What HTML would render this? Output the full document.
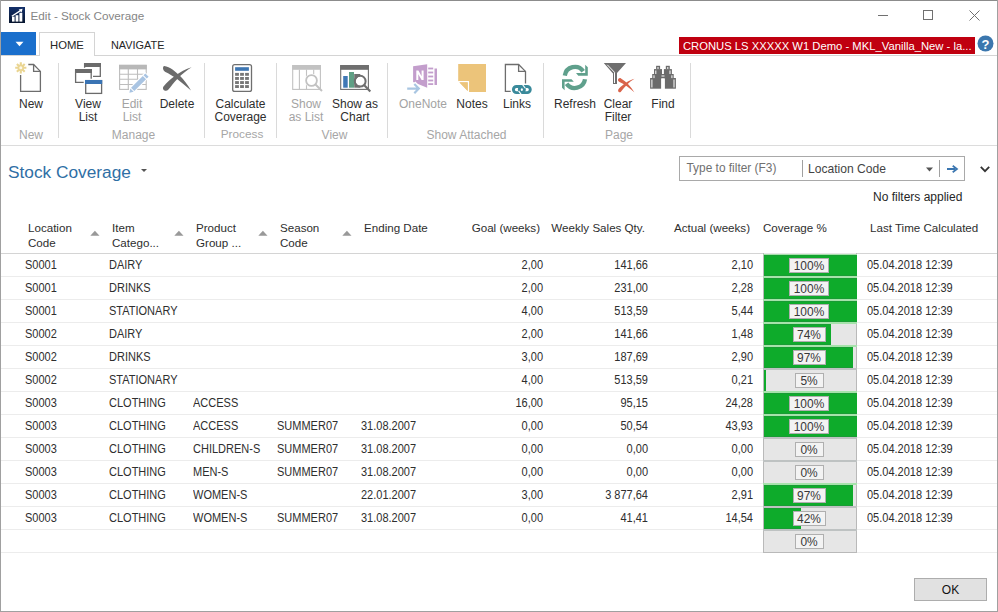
<!DOCTYPE html>
<html><head><meta charset="utf-8">
<style>
html,body{margin:0;padding:0;}
body{width:998px;height:612px;position:relative;overflow:hidden;background:#fff;font-family:"Liberation Sans",sans-serif;color:#2e2e2e;}
.a{position:absolute;}
.t{position:absolute;white-space:nowrap;line-height:1;}
.c{text-align:center;}
.r{text-align:right;}
.sx{transform:scaleX(.895);transform-origin:0 0;}
.sxr{transform:scaleX(.895);transform-origin:100% 0;}
.dis{color:#a3a3a3;}
.grp{color:#a6a6a6;}
.sep{position:absolute;width:1px;background:#dadada;top:63px;height:75px;}
.hl{position:absolute;left:1px;width:996px;height:1px;background:#ececec;}
.bar{position:absolute;left:764px;width:93px;height:22px;background:#e3e3e3;box-sizing:border-box;border:1px solid #c3c3c3;}
.bar .g{position:absolute;left:-1px;top:-1px;bottom:-1px;background:#11aa2f;}
.bar .lb{position:absolute;top:3px;height:15px;box-sizing:border-box;border:1px solid rgba(0,0,0,0.3);background:#f3f3f3;font-size:11px;line-height:13px;color:#333;text-align:center;}
</style></head><body>
<!-- window border -->
<div class="a" style="left:0;top:0;width:998px;height:1px;background:#8c8c8c"></div>
<div class="a" style="left:0;top:0;width:1px;height:612px;background:#a0a0a0"></div>
<div class="a" style="left:997px;top:0;width:1px;height:612px;background:#a0a0a0"></div>
<div class="a" style="left:0;top:611px;width:998px;height:1px;background:#a0a0a0"></div>

<!-- title bar -->
<svg class="a" style="left:9px;top:7px" width="16" height="16" viewBox="0 0 16 16">
<defs><linearGradient id="lg" x1="0" y1="0" x2="0" y2="1"><stop offset="0" stop-color="#13306a"/><stop offset="1" stop-color="#07152e"/></linearGradient></defs>
<rect width="16" height="16" fill="url(#lg)"/>
<path d="M2.8 9.2 L11.5 3.6" stroke="#fff" stroke-width="1.3"/>
<path d="M9.6 2.4 L13.6 1.8 L12.6 5.6 Z" fill="#fff"/>
<rect x="3" y="9.6" width="2.6" height="5" fill="#fff"/>
<rect x="6.6" y="8.2" width="2.8" height="6.4" fill="#fff"/>
<rect x="10.4" y="5.8" width="2.9" height="8.8" fill="#fff"/>
</svg>
<div class="t" style="left:30.5px;top:10.4px;font-size:11.7px;color:#858585">Edit - Stock Coverage</div>
<div class="a" style="left:878px;top:15px;width:10px;height:1px;background:#707070"></div>
<div class="a" style="left:923px;top:10px;width:10px;height:10px;box-sizing:border-box;border:1px solid #707070"></div>
<svg class="a" style="left:969px;top:10px" width="11" height="11" viewBox="0 0 11 11"><path d="M0.5 0.5 L10.5 10.5 M10.5 0.5 L0.5 10.5" stroke="#707070" stroke-width="1"/></svg>

<!-- tabs -->
<div class="a" style="left:1px;top:32px;width:35px;height:23px;background:#1a6fcc"></div>
<svg class="a" style="left:15px;top:41px" width="9" height="6" viewBox="0 0 9 6"><path d="M0.5 0.8 L8.5 0.8 L4.5 5.2 Z" fill="#fff"/></svg>
<div class="a" style="left:39px;top:32px;width:56px;height:24px;box-sizing:border-box;border:1px solid #d4d4d4;border-bottom:none;background:#fff"></div>
<div class="a" style="left:1px;top:55px;width:38px;height:1px;background:#d4d4d4"></div>
<div class="a" style="left:95px;top:55px;width:902px;height:1px;background:#d4d4d4"></div>
<div class="t" style="left:50px;top:40.2px;font-size:11.3px;color:#262626">HOME</div>
<div class="t" style="left:111px;top:40.2px;font-size:10.9px;color:#262626">NAVIGATE</div>
<div class="a" style="left:679px;top:37px;width:296px;height:17px;background:#c00010"></div>
<div class="t" style="left:683px;top:40.3px;font-size:11.6px;color:#fff;transform:scaleX(.97);transform-origin:0 0">CRONUS LS XXXXX W1 Demo - MKL_Vanilla_New - la...</div>
<svg class="a" style="left:977px;top:35px" width="17" height="17" viewBox="0 0 17 17"><circle cx="8.5" cy="8.5" r="8" fill="#3b77ae"/><text x="8.5" y="13.5" font-family="Liberation Sans" font-weight="bold" font-size="13" fill="#fff" text-anchor="middle">?</text></svg>

<!-- ribbon -->
<div class="a" style="left:1px;top:145px;width:996px;height:1px;background:#dcdcdc"></div>
<div class="sep" style="left:58px"></div>
<div class="sep" style="left:204px"></div>
<div class="sep" style="left:276px"></div>
<div class="sep" style="left:387px"></div>
<div class="sep" style="left:543px"></div>
<div class="sep" style="left:690px"></div>

<svg class="a" style="left:0;top:0" width="998" height="150" viewBox="0 0 998 150">
<!-- New -->
<g stroke="#6d6d6d" stroke-width="1.3" fill="none">
<path d="M20.6 75 V91.4 H40.4 V71.4 L33.6 64.5 H28.3"/>
<path d="M33.6 64.5 V71.4 H40.4"/>
</g>
<g stroke="#ead592" stroke-width="2.1" stroke-linecap="butt">
<path d="M20.8 62.2 V73.4 M15.2 67.8 H26.4 M16.9 63.9 L24.7 71.7 M24.7 63.9 L16.9 71.7"/>
</g>
<circle cx="20.8" cy="67.8" r="3.2" fill="#ead592"/>
<circle cx="20.8" cy="67.8" r="1.5" fill="#fdf8ea"/>
<!-- View List -->
<g stroke="#6b6b6b" stroke-width="1.3" fill="none">
<path d="M84.6 67.8 V63.6 H100.3 V76.3 H93"/>
<path d="M75.6 69.6 H91.2 V78.8 M75.6 69.6 V82.4 H83.7"/>
<rect x="85.7" y="80.6" width="15.9" height="12.8"/>
</g>
<rect x="84" y="63" width="17" height="4" fill="#6b6b6b"/>
<rect x="75" y="69" width="17" height="4" fill="#6b6b6b"/>
<rect x="85" y="80" width="17.2" height="4" fill="#3a74b4"/>
<!-- Edit List -->
<g stroke="#bdbdbd" stroke-width="1.1" fill="none">
<rect x="119.6" y="65.4" width="26.6" height="24"/>
<path d="M128.3 69 V89.4 M137.5 69 V89.4 M119.6 74.3 H146.2 M119.6 79.3 H146.2 M119.6 84.5 H146.2"/>
</g>
<rect x="119" y="64.8" width="27.8" height="4.6" fill="#b8b8b8"/>
<path d="M126 95 L137 84 L137 84" stroke="#fff" stroke-width="0"/>
<g transform="rotate(-45 138 84)">
<path d="M124.5 84 L129 80.6 H151.5 V87.4 H129 Z" fill="#fff"/>
<rect x="130.5" y="81.7" width="16.6" height="4.6" fill="#a9c4e2"/>
<rect x="148.1" y="81.7" width="2.6" height="4.6" fill="#a9c4e2"/>
<path d="M129.5 81.7 L125.8 84 L129.5 86.3 Z" fill="#a9c4e2"/>
</g>
<!-- Delete -->
<path d="M164.2 65.9 C170 66.6 175.5 71.5 179.4 75.3 C183.5 79.5 187.8 84.8 191 90.6 C186.3 86.3 181.5 82.3 176.8 78.7 C172.8 75.8 168.8 73.6 165.4 71.9 C162.6 70.5 162.4 66.3 164.2 65.9 Z" fill="#6b6b6b"/>
<path d="M163.3 86.8 C167 82.3 170.8 79 174.8 76.1 C180 72 185.8 69.1 191.6 67.3 C187.2 70.2 182.2 73.8 177.3 78.9 C174.2 82.2 171 86.3 168.2 89.8 C166.2 92.2 161.8 90.3 163.3 86.8 Z" fill="#6b6b6b"/>
<!-- Calculator -->
<rect x="232.7" y="64.6" width="18.8" height="26.8" rx="2" ry="2" fill="none" stroke="#6f6f6f" stroke-width="1.3"/>
<rect x="235.1" y="67.2" width="13.8" height="3.6" fill="#3d76b2"/>
<g fill="#777">
<rect x="235.1" y="72.9" width="3.8" height="2.9"/><rect x="240.1" y="72.9" width="3.8" height="2.9"/><rect x="245.1" y="72.9" width="3.8" height="2.9"/>
<rect x="235.1" y="77" width="3.8" height="2.9"/><rect x="240.1" y="77" width="3.8" height="2.9"/><rect x="245.1" y="77" width="3.8" height="2.9"/>
<rect x="235.1" y="81.1" width="3.8" height="2.9"/><rect x="240.1" y="81.1" width="3.8" height="2.9"/><rect x="245.1" y="81.1" width="3.8" height="2.9"/>
<rect x="235.1" y="85.1" width="3.8" height="2.9"/><rect x="240.1" y="85.1" width="3.8" height="2.9"/><rect x="245.1" y="85.1" width="3.8" height="2.9"/>
</g>
<!-- Show as List (disabled) -->
<g stroke="#c2c2c2" fill="none">
<rect x="292.7" y="65.6" width="27.7" height="23.8" stroke-width="1.1"/>
<path d="M299.4 69.5 V89.4 M306.5 69.5 V89.4 M313.7 69.5 V74.5" stroke-width="1.1"/>
</g>
<rect x="292.2" y="65.1" width="28.7" height="4.7" fill="#c2c2c2"/>
<circle cx="311.5" cy="80.5" r="6.8" fill="#fff"/>
<circle cx="311.5" cy="80.5" r="5.4" fill="none" stroke="#c2c2c2" stroke-width="1.8"/>
<path d="M315.5 84.5 L322 91" stroke="#c2c2c2" stroke-width="2"/>
<!-- Show as Chart -->
<rect x="340.7" y="65.6" width="27.7" height="23.8" fill="none" stroke="#6f6f6f" stroke-width="1.1"/>
<rect x="340.2" y="65.1" width="28.7" height="4.7" fill="#6f6f6f"/>
<rect x="343.2" y="76" width="4.5" height="11.7" fill="#3f78b5"/>
<rect x="349" y="72" width="5" height="15.7" fill="#5f9f84"/>
<rect x="354.2" y="74" width="6" height="13.7" fill="#6f6f6f"/>
<circle cx="360.2" cy="81.2" r="4.6" fill="#fff"/>
<circle cx="360.2" cy="81.2" r="5.4" fill="none" stroke="#6f6f6f" stroke-width="2"/>
<path d="M364.3 85.3 L370.3 91.5" stroke="#6f6f6f" stroke-width="2.2"/>
<!-- OneNote -->
<path d="M413.1 66.2 L427.2 64.2 V87.7 L413.1 81.9 Z" fill="#c39ecc"/>
<path d="M416.3 80 V70.5 H418.4 L421.6 76.2 V70.5 H423.6 V80 H421.6 L418.3 74.3 V80 Z" fill="#fff"/>
<g fill="#c39ecc">
<rect x="428.2" y="67.6" width="5" height="1.8"/><rect x="434.5" y="68.5" width="2.5" height="16.5"/>
<rect x="428.2" y="71.6" width="5" height="1.8"/><rect x="428.2" y="75.6" width="5" height="1.8"/><rect x="428.2" y="79.6" width="5" height="1.8"/><rect x="428.2" y="83.2" width="5" height="1.8"/>
</g>
<path d="M407.2 87.5 H417 M413.8 83 L418.8 88.4 L413.8 93.8" stroke="#fff" stroke-width="4.5" fill="none"/>
<path d="M407.2 88.6 H418 M414.3 84 L418.8 88.6 L414.3 93.2" stroke="#a9c6e2" stroke-width="2.2" fill="none"/>
<!-- Notes -->
<path d="M458.2 64 H486 V92 H468.9 L458.2 80.9 Z" fill="#ecc47a"/>
<path d="M458.2 81.6 H468.4 V92" stroke="#fff" stroke-width="1.3" fill="none"/>
<path d="M459.5 82.4 H467.6 V91 Z" fill="#ecc47a"/>
<!-- Links -->
<g stroke="#6d6d6d" stroke-width="1.3" fill="none">
<path d="M510.7 91.4 H505.4 V64.5 H518.6 L525.5 71.4 V83.6"/>
<path d="M518.6 64.5 V71.4 H525.5"/>
</g>
<g fill="none" stroke="#3a8a9b" stroke-width="2.9">
<rect x="513.4" y="86.5" width="11" height="6.1" rx="3.05" ry="3.05"/>
<rect x="519.3" y="86.5" width="11" height="6.1" rx="3.05" ry="3.05"/>
</g>
<path d="M522.6 84.6 L525.3 88.3" stroke="#fff" stroke-width="1.1"/>
<path d="M518.6 90.8 L521.4 94.6" stroke="#fff" stroke-width="1.1"/>
<!-- Refresh -->
<g id="rf">
<path d="M564.8 75.6 A10.2 10.2 0 0 1 583.2 71.2" stroke="#5fa08c" stroke-width="4.3" fill="none"/>
<path d="M585.2 64.7 L587.8 67.2 L587.8 75.7 L578.3 75.7 L576 73.1 L585.2 73.1 Z" fill="#5fa08c"/>
</g>
<use href="#rf" transform="rotate(180 574.9 77.45)"/>
<!-- Clear Filter -->
<path d="M603.8 63 H626 L617 73 V84 H613 V73.4 Z" fill="#6e6e6e"/>
<path d="M607.3 64.8 L614.5 72.3 V83" stroke="#fff" stroke-width="1" fill="none"/>
<path d="M618 80.5 C617.8 78.5 619.5 77.6 621 78.4 C626.5 81.5 631 86.5 634.3 92.3 C629.5 88 625 84.5 619.5 82 C618.7 81.6 618.1 81.1 618 80.5 Z" fill="#d9634a"/>
<path d="M618.1 90.2 C618 92.2 619.6 92.8 620.7 92 C624.2 87.6 628.7 82 634.5 78.8 C628 80.5 623.2 84.5 619.2 88.3 C618.6 88.9 618.2 89.6 618.1 90.2 Z" fill="#d9634a"/>
<!-- Find -->
<g fill="#6b6b6b">
<rect x="656.1" y="65.8" width="4" height="3.4"/>
<rect x="654" y="69.1" width="8" height="5"/>
<rect x="652.2" y="74" width="10" height="4.2"/>
<rect x="650.1" y="78" width="11" height="10.7"/>
<rect x="665.8" y="65.8" width="4" height="3.4"/>
<rect x="663.9" y="69.1" width="8" height="5"/>
<rect x="663.7" y="74" width="10" height="4.2"/>
<rect x="664.9" y="78" width="11" height="10.7"/>
<rect x="661" y="74" width="4" height="4.2"/>
</g>
<g fill="#fff">
<rect x="657.5" y="67" width="1" height="2"/><rect x="667.3" y="67" width="1" height="2"/>
<rect x="655.3" y="70.5" width="1" height="3.5"/><rect x="669.5" y="70.5" width="1" height="3.5"/>
<rect x="653.5" y="75.3" width="1" height="2.8"/><rect x="671.4" y="75.3" width="1" height="2.8"/>
<rect x="651.4" y="79.5" width="1" height="8"/><rect x="673.5" y="79.5" width="1" height="8"/>
<rect x="661.5" y="75.5" width="3" height="1"/>
</g>
</svg>

<div id="ribbon-text">
<div class="t c" style="left:0px;width:62px;top:97.5px;font-size:12px">New</div>
<div class="t c" style="left:0px;width:62px;top:128.5px;font-size:12px" ><span class="grp">New</span></div>
<div class="t c" style="left:62px;width:52px;top:97.5px;font-size:12px">View</div>
<div class="t c" style="left:62px;width:52px;top:110.5px;font-size:12px">List</div>
<div class="t c dis" style="left:108px;width:48px;top:97.5px;font-size:12px">Edit</div>
<div class="t c dis" style="left:108px;width:48px;top:110.5px;font-size:12px">List</div>
<div class="t c" style="left:154px;width:46px;top:97.5px;font-size:12px">Delete</div>
<div class="t c grp" style="left:60.5px;width:146px;top:128.5px;font-size:12px">Manage</div>
<div class="t c" style="left:205px;width:71px;top:97.5px;font-size:12px">Calculate</div>
<div class="t c" style="left:205px;width:71px;top:110.5px;font-size:12px">Coverage</div>
<div class="t c grp" style="left:206.5px;width:71px;top:128.5px;font-size:11.8px">Process</div>
<div class="t c dis" style="left:283px;width:46px;top:97.5px;font-size:12px">Show</div>
<div class="t c dis" style="left:283px;width:46px;top:110.5px;font-size:12px">as List</div>
<div class="t c" style="left:329px;width:52px;top:97.5px;font-size:12px">Show as</div>
<div class="t c" style="left:329px;width:52px;top:110.5px;font-size:12px">Chart</div>
<div class="t c grp" style="left:279.5px;width:110px;top:128.5px;font-size:12px">View</div>
<div class="t c dis" style="left:393px;width:60px;top:97.5px;font-size:12px">OneNote</div>
<div class="t c" style="left:452px;width:40px;top:97.5px;font-size:12px">Notes</div>
<div class="t c" style="left:497px;width:40px;top:97.5px;font-size:12px">Links</div>
<div class="t c grp" style="left:389px;width:155px;top:128.5px;font-size:12px">Show Attached</div>
<div class="t c" style="left:550px;width:50px;top:97.5px;font-size:12px">Refresh</div>
<div class="t c" style="left:598px;width:40px;top:97.5px;font-size:12px">Clear</div>
<div class="t c" style="left:598px;width:40px;top:110.5px;font-size:12px">Filter</div>
<div class="t c" style="left:643px;width:40px;top:97.5px;font-size:12px">Find</div>
<div class="t c grp" style="left:546px;width:146px;top:128.5px;font-size:12px">Page</div>
</div>

<!-- page header -->
<div class="t" style="left:8px;top:163.5px;font-size:17.3px;color:#2f6fa5">Stock Coverage</div>
<svg class="a" style="left:140.5px;top:169px" width="6" height="3" viewBox="0 0 6 3"><path d="M0 0 L6 0 L3 3Z" fill="#555"/></svg>

<div class="a" style="left:679px;top:156px;width:286px;height:25px;box-sizing:border-box;border:1px solid #a9a9a9"></div>
<div class="t" style="left:686.5px;top:162.6px;font-size:11.9px;color:#707070">Type to filter (F3)</div>
<div class="a" style="left:802px;top:160px;width:1px;height:17px;background:#a0a0a0"></div>
<div class="t" style="left:808px;top:162.9px;font-size:12.1px;color:#444">Location Code</div>
<svg class="a" style="left:926px;top:167px" width="7" height="5" viewBox="0 0 7 5"><path d="M0 0.5 L7 0.5 L3.5 4.5Z" fill="#555"/></svg>
<div class="a" style="left:939px;top:160px;width:1px;height:17px;background:#a0a0a0"></div>
<svg class="a" style="left:947px;top:165px" width="12" height="8" viewBox="0 0 12 8"><path d="M0 3.1 H8 V4.9 H0Z M6.2 0 L11.4 4 L6.2 8 L5.2 6.6 L8.5 4 L5.2 1.4Z" fill="#3b76b0"/></svg>
<svg class="a" style="left:979.5px;top:165.5px" width="10" height="7" viewBox="0 0 10 7"><path d="M0.8 0.8 L5 5.2 L9.2 0.8" stroke="#333" stroke-width="1.8" fill="none"/></svg>
<div class="t" style="left:873px;top:190.5px;font-size:12px;color:#262626">No filters applied</div>

<!-- grid header -->
<div class="t" style="left:28px;top:221.98px;font-size:11.6px">Location</div>
<div class="t" style="left:28px;top:236.98px;font-size:11.6px">Code</div>
<div class="t" style="left:112px;top:221.98px;font-size:11.6px">Item</div>
<div class="t" style="left:112px;top:236.98px;font-size:11.6px">Catego...</div>
<div class="t" style="left:196px;top:221.98px;font-size:11.6px">Product</div>
<div class="t" style="left:196px;top:236.98px;font-size:11.6px">Group ...</div>
<div class="t" style="left:280px;top:221.98px;font-size:11.6px">Season</div>
<div class="t" style="left:280px;top:236.98px;font-size:11.6px">Code</div>
<svg class="a" style="left:89.5px;top:230px" width="10" height="6" viewBox="0 0 10 6"><path d="M0.3 5.7 L9.5 5.7 L4.9 0.8Z" fill="#999"/></svg>
<svg class="a" style="left:173.5px;top:230px" width="10" height="6" viewBox="0 0 10 6"><path d="M0.3 5.7 L9.5 5.7 L4.9 0.8Z" fill="#999"/></svg>
<svg class="a" style="left:257.5px;top:230px" width="10" height="6" viewBox="0 0 10 6"><path d="M0.3 5.7 L9.5 5.7 L4.9 0.8Z" fill="#999"/></svg>
<svg class="a" style="left:341.5px;top:230px" width="10" height="6" viewBox="0 0 10 6"><path d="M0.3 5.7 L9.5 5.7 L4.9 0.8Z" fill="#999"/></svg>
<div class="t" style="left:364px;top:221.98px;font-size:11.6px">Ending Date</div>
<div class="t r" style="left:340px;width:200px;top:221.98px;font-size:11.6px">Goal (weeks)</div>
<div class="t r" style="left:445px;width:200px;top:221.98px;font-size:11.6px">Weekly Sales Qty.</div>
<div class="t r" style="left:550px;width:200px;top:221.98px;font-size:11.6px">Actual (weeks)</div>
<div class="t" style="left:763px;top:221.98px;font-size:11.6px">Coverage %</div>
<div class="t" style="left:870px;top:221.98px;font-size:11.6px">Last Time Calculated</div>
<div class="a" style="left:1px;top:253px;width:996px;height:1px;background:#d4d4d4"></div>
<div class="hl" style="top:276px"></div>
<div class="hl" style="top:299px"></div>
<div class="hl" style="top:322px"></div>
<div class="hl" style="top:345px"></div>
<div class="hl" style="top:368px"></div>
<div class="hl" style="top:391px"></div>
<div class="hl" style="top:414px"></div>
<div class="hl" style="top:437px"></div>
<div class="hl" style="top:460px"></div>
<div class="hl" style="top:483px"></div>
<div class="hl" style="top:506px"></div>
<div class="hl" style="top:529px"></div>
<div class="hl" style="top:552px"></div>
<div class="t sx" style="left:25px;top:259.09px;font-size:12.3px">S0001</div>
<div class="t sx" style="left:109px;top:259.09px;font-size:12.3px">DAIRY</div>
<div class="t r sxr" style="left:443px;width:100px;top:259.09px;font-size:12.3px">2,00</div>
<div class="t r sxr" style="left:548px;width:100px;top:259.09px;font-size:12.3px">141,66</div>
<div class="t r sxr" style="left:653px;width:100px;top:259.09px;font-size:12.3px">2,10</div>
<div class="t sx" style="left:867px;top:259.09px;font-size:12.3px">05.04.2018 12:39</div>
<div class="t sx" style="left:25px;top:282.09px;font-size:12.3px">S0001</div>
<div class="t sx" style="left:109px;top:282.09px;font-size:12.3px">DRINKS</div>
<div class="t r sxr" style="left:443px;width:100px;top:282.09px;font-size:12.3px">2,00</div>
<div class="t r sxr" style="left:548px;width:100px;top:282.09px;font-size:12.3px">231,00</div>
<div class="t r sxr" style="left:653px;width:100px;top:282.09px;font-size:12.3px">2,28</div>
<div class="t sx" style="left:867px;top:282.09px;font-size:12.3px">05.04.2018 12:39</div>
<div class="t sx" style="left:25px;top:305.09px;font-size:12.3px">S0001</div>
<div class="t sx" style="left:109px;top:305.09px;font-size:12.3px">STATIONARY</div>
<div class="t r sxr" style="left:443px;width:100px;top:305.09px;font-size:12.3px">4,00</div>
<div class="t r sxr" style="left:548px;width:100px;top:305.09px;font-size:12.3px">513,59</div>
<div class="t r sxr" style="left:653px;width:100px;top:305.09px;font-size:12.3px">5,44</div>
<div class="t sx" style="left:867px;top:305.09px;font-size:12.3px">05.04.2018 12:39</div>
<div class="t sx" style="left:25px;top:328.09px;font-size:12.3px">S0002</div>
<div class="t sx" style="left:109px;top:328.09px;font-size:12.3px">DAIRY</div>
<div class="t r sxr" style="left:443px;width:100px;top:328.09px;font-size:12.3px">2,00</div>
<div class="t r sxr" style="left:548px;width:100px;top:328.09px;font-size:12.3px">141,66</div>
<div class="t r sxr" style="left:653px;width:100px;top:328.09px;font-size:12.3px">1,48</div>
<div class="t sx" style="left:867px;top:328.09px;font-size:12.3px">05.04.2018 12:39</div>
<div class="t sx" style="left:25px;top:351.09px;font-size:12.3px">S0002</div>
<div class="t sx" style="left:109px;top:351.09px;font-size:12.3px">DRINKS</div>
<div class="t r sxr" style="left:443px;width:100px;top:351.09px;font-size:12.3px">3,00</div>
<div class="t r sxr" style="left:548px;width:100px;top:351.09px;font-size:12.3px">187,69</div>
<div class="t r sxr" style="left:653px;width:100px;top:351.09px;font-size:12.3px">2,90</div>
<div class="t sx" style="left:867px;top:351.09px;font-size:12.3px">05.04.2018 12:39</div>
<div class="t sx" style="left:25px;top:374.09px;font-size:12.3px">S0002</div>
<div class="t sx" style="left:109px;top:374.09px;font-size:12.3px">STATIONARY</div>
<div class="t r sxr" style="left:443px;width:100px;top:374.09px;font-size:12.3px">4,00</div>
<div class="t r sxr" style="left:548px;width:100px;top:374.09px;font-size:12.3px">513,59</div>
<div class="t r sxr" style="left:653px;width:100px;top:374.09px;font-size:12.3px">0,21</div>
<div class="t sx" style="left:867px;top:374.09px;font-size:12.3px">05.04.2018 12:39</div>
<div class="t sx" style="left:25px;top:397.09px;font-size:12.3px">S0003</div>
<div class="t sx" style="left:109px;top:397.09px;font-size:12.3px">CLOTHING</div>
<div class="t sx" style="left:193px;top:397.09px;font-size:12.3px">ACCESS</div>
<div class="t r sxr" style="left:443px;width:100px;top:397.09px;font-size:12.3px">16,00</div>
<div class="t r sxr" style="left:548px;width:100px;top:397.09px;font-size:12.3px">95,15</div>
<div class="t r sxr" style="left:653px;width:100px;top:397.09px;font-size:12.3px">24,28</div>
<div class="t sx" style="left:867px;top:397.09px;font-size:12.3px">05.04.2018 12:39</div>
<div class="t sx" style="left:25px;top:420.09px;font-size:12.3px">S0003</div>
<div class="t sx" style="left:109px;top:420.09px;font-size:12.3px">CLOTHING</div>
<div class="t sx" style="left:193px;top:420.09px;font-size:12.3px">ACCESS</div>
<div class="t sx" style="left:277px;top:420.09px;font-size:12.3px">SUMMER07</div>
<div class="t sx" style="left:361px;top:420.09px;font-size:12.3px">31.08.2007</div>
<div class="t r sxr" style="left:443px;width:100px;top:420.09px;font-size:12.3px">0,00</div>
<div class="t r sxr" style="left:548px;width:100px;top:420.09px;font-size:12.3px">50,54</div>
<div class="t r sxr" style="left:653px;width:100px;top:420.09px;font-size:12.3px">43,93</div>
<div class="t sx" style="left:867px;top:420.09px;font-size:12.3px">05.04.2018 12:39</div>
<div class="t sx" style="left:25px;top:443.09px;font-size:12.3px">S0003</div>
<div class="t sx" style="left:109px;top:443.09px;font-size:12.3px">CLOTHING</div>
<div class="t sx" style="left:193px;top:443.09px;font-size:12.3px">CHILDREN-S</div>
<div class="t sx" style="left:277px;top:443.09px;font-size:12.3px">SUMMER07</div>
<div class="t sx" style="left:361px;top:443.09px;font-size:12.3px">31.08.2007</div>
<div class="t r sxr" style="left:443px;width:100px;top:443.09px;font-size:12.3px">0,00</div>
<div class="t r sxr" style="left:548px;width:100px;top:443.09px;font-size:12.3px">0,00</div>
<div class="t r sxr" style="left:653px;width:100px;top:443.09px;font-size:12.3px">0,00</div>
<div class="t sx" style="left:867px;top:443.09px;font-size:12.3px">05.04.2018 12:39</div>
<div class="t sx" style="left:25px;top:466.09px;font-size:12.3px">S0003</div>
<div class="t sx" style="left:109px;top:466.09px;font-size:12.3px">CLOTHING</div>
<div class="t sx" style="left:193px;top:466.09px;font-size:12.3px">MEN-S</div>
<div class="t sx" style="left:277px;top:466.09px;font-size:12.3px">SUMMER07</div>
<div class="t sx" style="left:361px;top:466.09px;font-size:12.3px">31.08.2007</div>
<div class="t r sxr" style="left:443px;width:100px;top:466.09px;font-size:12.3px">0,00</div>
<div class="t r sxr" style="left:548px;width:100px;top:466.09px;font-size:12.3px">0,00</div>
<div class="t r sxr" style="left:653px;width:100px;top:466.09px;font-size:12.3px">0,00</div>
<div class="t sx" style="left:867px;top:466.09px;font-size:12.3px">05.04.2018 12:39</div>
<div class="t sx" style="left:25px;top:489.09px;font-size:12.3px">S0003</div>
<div class="t sx" style="left:109px;top:489.09px;font-size:12.3px">CLOTHING</div>
<div class="t sx" style="left:193px;top:489.09px;font-size:12.3px">WOMEN-S</div>
<div class="t sx" style="left:361px;top:489.09px;font-size:12.3px">22.01.2007</div>
<div class="t r sxr" style="left:443px;width:100px;top:489.09px;font-size:12.3px">3,00</div>
<div class="t r sxr" style="left:548px;width:100px;top:489.09px;font-size:12.3px">3 877,64</div>
<div class="t r sxr" style="left:653px;width:100px;top:489.09px;font-size:12.3px">2,91</div>
<div class="t sx" style="left:867px;top:489.09px;font-size:12.3px">05.04.2018 12:39</div>
<div class="t sx" style="left:25px;top:512.09px;font-size:12.3px">S0003</div>
<div class="t sx" style="left:109px;top:512.09px;font-size:12.3px">CLOTHING</div>
<div class="t sx" style="left:193px;top:512.09px;font-size:12.3px">WOMEN-S</div>
<div class="t sx" style="left:277px;top:512.09px;font-size:12.3px">SUMMER07</div>
<div class="t sx" style="left:361px;top:512.09px;font-size:12.3px">31.08.2007</div>
<div class="t r sxr" style="left:443px;width:100px;top:512.09px;font-size:12.3px">0,00</div>
<div class="t r sxr" style="left:548px;width:100px;top:512.09px;font-size:12.3px">41,41</div>
<div class="t r sxr" style="left:653px;width:100px;top:512.09px;font-size:12.3px">14,54</div>
<div class="t sx" style="left:867px;top:512.09px;font-size:12.3px">05.04.2018 12:39</div>
<div class="a" style="left:763px;top:253px;width:94px;height:23px;box-sizing:border-box;border-left:1px solid #b9b9b9;border-right:1px solid #b9b9b9;background:#e6e6e6"></div><div class="a" style="left:763px;top:254px;width:94px;height:1px;background:#a6e2ab"></div><div class="a" style="left:764px;top:255px;width:93px;height:21px;box-sizing:border-box;border-top:1px solid #189c34;border-bottom:1px solid #189c34;background:#0eab2b"></div><div class="a" style="left:789.4px;top:258px;width:40px;height:15px;box-sizing:border-box;border:1px solid rgba(0,0,0,0.28);background:#f3f3f3"></div><div class="t c" style="left:779.4px;width:60px;top:259.79px;font-size:12.3px;color:#383838;transform:scaleX(.97);transform-origin:50% 0">100%</div>
<div class="a" style="left:763px;top:276px;width:94px;height:23px;box-sizing:border-box;border-left:1px solid #b9b9b9;border-right:1px solid #b9b9b9;background:#e6e6e6"></div><div class="a" style="left:763px;top:276px;width:94px;height:2px;background:#a6e2ab"></div><div class="a" style="left:764px;top:278px;width:93px;height:21px;box-sizing:border-box;border-top:1px solid #189c34;border-bottom:1px solid #189c34;background:#0eab2b"></div><div class="a" style="left:789.4px;top:281px;width:40px;height:15px;box-sizing:border-box;border:1px solid rgba(0,0,0,0.28);background:#f3f3f3"></div><div class="t c" style="left:779.4px;width:60px;top:282.79px;font-size:12.3px;color:#383838;transform:scaleX(.97);transform-origin:50% 0">100%</div>
<div class="a" style="left:763px;top:299px;width:94px;height:23px;box-sizing:border-box;border-left:1px solid #b9b9b9;border-right:1px solid #b9b9b9;background:#e6e6e6"></div><div class="a" style="left:763px;top:299px;width:94px;height:2px;background:#a6e2ab"></div><div class="a" style="left:764px;top:301px;width:93px;height:21px;box-sizing:border-box;border-top:1px solid #189c34;border-bottom:1px solid #189c34;background:#0eab2b"></div><div class="a" style="left:789.4px;top:304px;width:40px;height:15px;box-sizing:border-box;border:1px solid rgba(0,0,0,0.28);background:#f3f3f3"></div><div class="t c" style="left:779.4px;width:60px;top:305.79px;font-size:12.3px;color:#383838;transform:scaleX(.97);transform-origin:50% 0">100%</div>
<div class="a" style="left:763px;top:322px;width:94px;height:23px;box-sizing:border-box;border-left:1px solid #b9b9b9;border-right:1px solid #b9b9b9;background:#e6e6e6"></div><div class="a" style="left:763px;top:322px;width:94px;height:2px;background:#a6e2ab"></div><div class="a" style="left:764px;top:324px;width:67px;height:21px;box-sizing:border-box;border-top:1px solid #189c34;border-bottom:1px solid #189c34;background:#0eab2b"></div><div class="a" style="left:792.7px;top:327px;width:33.4px;height:15px;box-sizing:border-box;border:1px solid rgba(0,0,0,0.28);background:#f3f3f3"></div><div class="t c" style="left:779.4px;width:60px;top:328.79px;font-size:12.3px;color:#383838;transform:scaleX(.97);transform-origin:50% 0">74%</div>
<div class="a" style="left:763px;top:345px;width:94px;height:23px;box-sizing:border-box;border-left:1px solid #b9b9b9;border-right:1px solid #b9b9b9;background:#e6e6e6"></div><div class="a" style="left:763px;top:345px;width:94px;height:2px;background:#a6e2ab"></div><div class="a" style="left:764px;top:347px;width:89px;height:21px;box-sizing:border-box;border-top:1px solid #189c34;border-bottom:1px solid #189c34;background:#0eab2b"></div><div class="a" style="left:792.7px;top:350px;width:33.4px;height:15px;box-sizing:border-box;border:1px solid rgba(0,0,0,0.28);background:#f3f3f3"></div><div class="t c" style="left:779.4px;width:60px;top:351.79px;font-size:12.3px;color:#383838;transform:scaleX(.97);transform-origin:50% 0">97%</div>
<div class="a" style="left:763px;top:368px;width:94px;height:23px;box-sizing:border-box;border-left:1px solid #b9b9b9;border-right:1px solid #b9b9b9;background:#e6e6e6"></div><div class="a" style="left:763px;top:368px;width:94px;height:2px;background:#bec2c2"></div><div class="a" style="left:764px;top:370px;width:2px;height:21px;box-sizing:border-box;border-top:1px solid #189c34;border-bottom:1px solid #189c34;background:#0eab2b"></div><div class="a" style="left:795.2px;top:373px;width:28.4px;height:15px;box-sizing:border-box;border:1px solid rgba(0,0,0,0.28);background:#f3f3f3"></div><div class="t c" style="left:779.4px;width:60px;top:374.79px;font-size:12.3px;color:#383838;transform:scaleX(.97);transform-origin:50% 0">5%</div>
<div class="a" style="left:763px;top:391px;width:94px;height:23px;box-sizing:border-box;border-left:1px solid #b9b9b9;border-right:1px solid #b9b9b9;background:#e6e6e6"></div><div class="a" style="left:763px;top:391px;width:94px;height:2px;background:#a6e2ab"></div><div class="a" style="left:764px;top:393px;width:93px;height:21px;box-sizing:border-box;border-top:1px solid #189c34;border-bottom:1px solid #189c34;background:#0eab2b"></div><div class="a" style="left:789.4px;top:396px;width:40px;height:15px;box-sizing:border-box;border:1px solid rgba(0,0,0,0.28);background:#f3f3f3"></div><div class="t c" style="left:779.4px;width:60px;top:397.79px;font-size:12.3px;color:#383838;transform:scaleX(.97);transform-origin:50% 0">100%</div>
<div class="a" style="left:763px;top:414px;width:94px;height:23px;box-sizing:border-box;border-left:1px solid #b9b9b9;border-right:1px solid #b9b9b9;background:#e6e6e6"></div><div class="a" style="left:763px;top:414px;width:94px;height:2px;background:#a6e2ab"></div><div class="a" style="left:764px;top:416px;width:93px;height:21px;box-sizing:border-box;border-top:1px solid #189c34;border-bottom:1px solid #189c34;background:#0eab2b"></div><div class="a" style="left:789.4px;top:419px;width:40px;height:15px;box-sizing:border-box;border:1px solid rgba(0,0,0,0.28);background:#f3f3f3"></div><div class="t c" style="left:779.4px;width:60px;top:420.79px;font-size:12.3px;color:#383838;transform:scaleX(.97);transform-origin:50% 0">100%</div>
<div class="a" style="left:763px;top:437px;width:94px;height:23px;box-sizing:border-box;border-left:1px solid #b9b9b9;border-right:1px solid #b9b9b9;background:#e6e6e6"></div><div class="a" style="left:763px;top:437px;width:94px;height:2px;background:#bec2c2"></div><div class="a" style="left:795.2px;top:442px;width:28.4px;height:15px;box-sizing:border-box;border:1px solid rgba(0,0,0,0.28);background:#f3f3f3"></div><div class="t c" style="left:779.4px;width:60px;top:443.79px;font-size:12.3px;color:#383838;transform:scaleX(.97);transform-origin:50% 0">0%</div>
<div class="a" style="left:763px;top:460px;width:94px;height:23px;box-sizing:border-box;border-left:1px solid #b9b9b9;border-right:1px solid #b9b9b9;background:#e6e6e6"></div><div class="a" style="left:763px;top:460px;width:94px;height:2px;background:#bec2c2"></div><div class="a" style="left:795.2px;top:465px;width:28.4px;height:15px;box-sizing:border-box;border:1px solid rgba(0,0,0,0.28);background:#f3f3f3"></div><div class="t c" style="left:779.4px;width:60px;top:466.79px;font-size:12.3px;color:#383838;transform:scaleX(.97);transform-origin:50% 0">0%</div>
<div class="a" style="left:763px;top:483px;width:94px;height:23px;box-sizing:border-box;border-left:1px solid #b9b9b9;border-right:1px solid #b9b9b9;background:#e6e6e6"></div><div class="a" style="left:763px;top:483px;width:94px;height:2px;background:#a6e2ab"></div><div class="a" style="left:764px;top:485px;width:89px;height:21px;box-sizing:border-box;border-top:1px solid #189c34;border-bottom:1px solid #189c34;background:#0eab2b"></div><div class="a" style="left:792.7px;top:488px;width:33.4px;height:15px;box-sizing:border-box;border:1px solid rgba(0,0,0,0.28);background:#f3f3f3"></div><div class="t c" style="left:779.4px;width:60px;top:489.79px;font-size:12.3px;color:#383838;transform:scaleX(.97);transform-origin:50% 0">97%</div>
<div class="a" style="left:763px;top:506px;width:94px;height:23px;box-sizing:border-box;border-left:1px solid #b9b9b9;border-right:1px solid #b9b9b9;background:#e6e6e6"></div><div class="a" style="left:763px;top:506px;width:94px;height:2px;background:#bec2c2"></div><div class="a" style="left:764px;top:508px;width:37px;height:21px;box-sizing:border-box;border-top:1px solid #189c34;border-bottom:1px solid #189c34;background:#0eab2b"></div><div class="a" style="left:792.7px;top:511px;width:33.4px;height:15px;box-sizing:border-box;border:1px solid rgba(0,0,0,0.28);background:#f3f3f3"></div><div class="t c" style="left:779.4px;width:60px;top:512.79px;font-size:12.3px;color:#383838;transform:scaleX(.97);transform-origin:50% 0">42%</div>
<div class="a" style="left:763px;top:529px;width:94px;height:24px;box-sizing:border-box;border-left:1px solid #b9b9b9;border-right:1px solid #b9b9b9;border-bottom:1px solid #b9b9b9;background:#e6e6e6"></div><div class="a" style="left:763px;top:529px;width:94px;height:2px;background:#bec2c2"></div><div class="a" style="left:795.2px;top:534px;width:28.4px;height:15px;box-sizing:border-box;border:1px solid rgba(0,0,0,0.28);background:#f3f3f3"></div><div class="t c" style="left:779.4px;width:60px;top:535.79px;font-size:12.3px;color:#383838;transform:scaleX(.97);transform-origin:50% 0">0%</div>

<!-- OK button -->
<div class="a" style="left:914px;top:578px;width:73px;height:23px;box-sizing:border-box;border:1px solid #adadad;background:#e1e1e1"></div>
<div class="t c" style="left:914px;top:584px;width:73px;font-size:12px;color:#111">OK</div>
</body></html>
